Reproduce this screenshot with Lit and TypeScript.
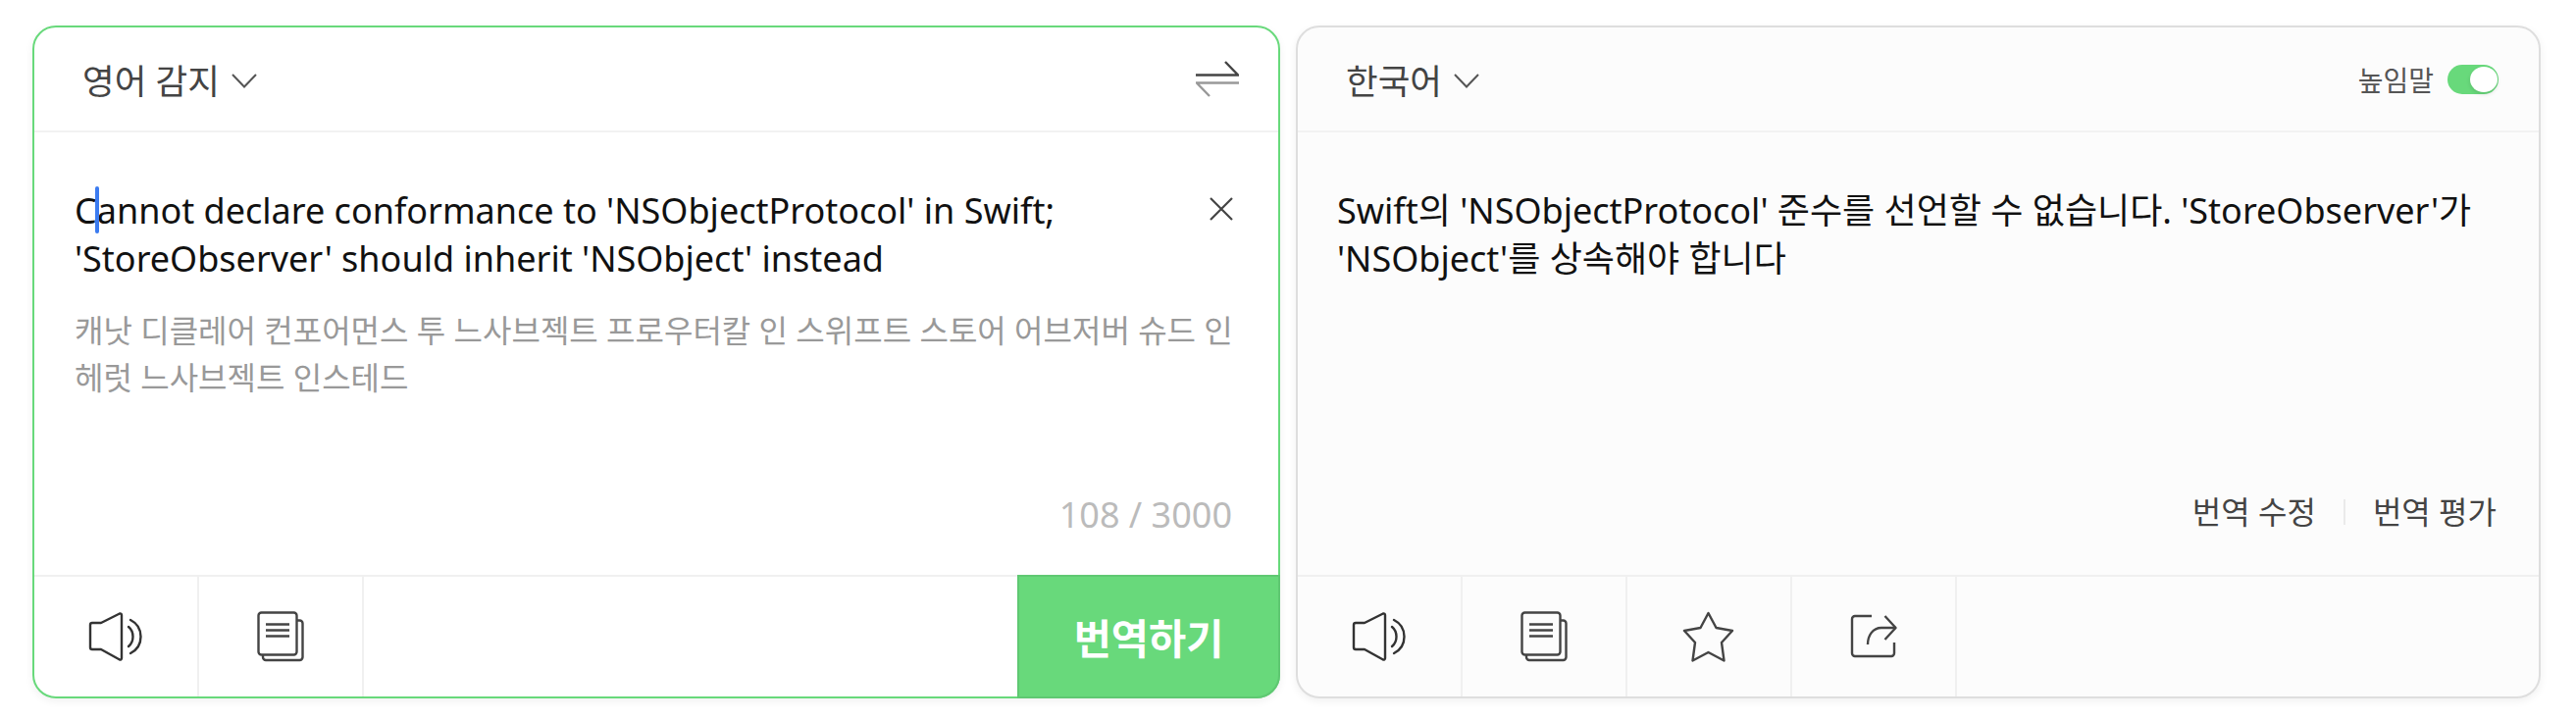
import { LitElement, html, css, svg } from "lit";
import { customElement } from "lit/decorators.js";

const speaker = svg`<svg class="ic" width="56" height="50" viewBox="-1 -1 56 50" fill="none" stroke="#333" stroke-width="2.4" stroke-linecap="round" stroke-linejoin="round"><path d="M12 10H3a2 2 0 0 0-2 2v23a2 2 0 0 0 2 2h9l19 10.500a1.500 1.500 0 0 0 2-1.500V2a1.500 1.500 0 0 0-2-1.500z"/><path d="M40 14c6 5 6 15 0 20"/><path d="M42 7c14 7 14 27 0 34"/></svg>`;
const copy = svg`<svg class="ic" width="48" height="52" viewBox="-1 -1 48 52" fill="none" stroke="#444" stroke-width="2.4" stroke-linejoin="round"><rect x="0.500" y="0.500" width="39" height="43" rx="3"/><path d="M40 8.500h2.500a3 3 0 0 1 3 3V46a3 3 0 0 1-3 3H8a3 3 0 0 1-3-3v-2"/><path d="M8 12.500h24M8 18.500h24M8 24.500h24"/></svg>`;
const star = svg`<svg class="ic" width="54" height="52" viewBox="-1 -1 54 52" fill="none" stroke="#444" stroke-width="2.4" stroke-linejoin="round"><path d="M25.500 1 33.500 16 50 19 39 31 41.500 49.500 25.500 41 9.500 49.500 12 31 1 19 17.500 16z"/></svg>`;
const share = svg`<svg class="ic" width="48" height="46" viewBox="-1 -1 48 46" fill="none" stroke="#444" stroke-width="2.4" stroke-linejoin="round"><path d="M21 1H4a3 3 0 0 0-3 3v35a3 3 0 0 0 3 3h37a3 3 0 0 0 3-3V28"/><path d="M34.500 1 45.500 13 34.500 25"/><path d="M45.500 13H31C22 13 17 21 17 30"/></svg>`;
const chevron = svg`<svg class="chev" width="26" height="15" viewBox="0 0 26 15" fill="none" stroke="#555" stroke-width="2"><path d="M1 1l12 12.500L25 1"/></svg>`;
const swap = svg`<svg width="44" height="38" viewBox="0 0 44 38" fill="none" stroke-width="2.400"><path d="M0 14.500H43L30 1" stroke="#444"/><path d="M44 22.500H1L14 36" stroke="#999"/></svg>`;
const close = svg`<svg class="x" width="24" height="24" viewBox="0 0 24 24" fill="none" stroke="#444" stroke-width="2.200"><path d="M1 1l22 22M23 1 1 23"/></svg>`;

@customElement("app-root")
export class AppRoot extends LitElement {
  static styles = css`
    :host {
      display: flex;
      gap: 16px;
      padding: 26px 36px 22px 33px;
      background: #fff;
      font-family: "Noto Sans", "Noto Sans CJK KR", sans-serif;
      color: #111;
      box-sizing: border-box;
      width: 2626px;
      height: 734px;
    }
    .card {
      flex: none;
      width: 1269px;
      height: 686px;
      box-sizing: border-box;
      border: 2px solid #dedede;
      border-radius: 24px;
      background: #fcfcfc;
      box-shadow: 0 3px 8px rgba(0, 0, 0, 0.06);
      display: flex;
      flex-direction: column;
    }
    .card.src {
      width: 1272px;
      border-color: #68d97b;
      background: #fff;
    }
    .head {
      height: 105px;
      flex: none;
      border-bottom: 2px solid #f2f2f2;
      display: flex;
      align-items: center;
      justify-content: space-between;
      padding: 0 40px 0 49px;
    }
    .lang {
      display: flex;
      align-items: center;
      gap: 12px;
      font-size: 35.500px;
      color: #444;
    }
    .chev { margin-top: 4px; }
    .honor {
      display: flex;
      align-items: center;
      gap: 14px;
      font-size: 28px;
      color: #555;
      padding-right: 1px;
    }
    .toggle {
      width: 52px;
      height: 30px;
      border-radius: 15px;
      background: #68d97b;
      display: flex;
      justify-content: flex-end;
      box-sizing: border-box;
      padding: 2px 1px;
    }
    .knob {
      width: 28px;
      height: 26px;
      border-radius: 50%;
      background: #fff;
      box-shadow: 0 2px 4px rgba(0, 0, 0, 0.12);
    }
    .body {
      flex: 1;
      min-height: 0;
      display: flex;
      flex-direction: column;
      padding: 55px 28px 0 41px;
    }
    .dst .body { padding-left: 40px; }
    .row {
      display: flex;
      justify-content: space-between;
      align-items: flex-start;
    }
    .text {
      font-size: 36px;
      line-height: 49px;
      white-space: nowrap;
      position: relative;
    }
    .x { margin: 11px 18px 0 0; }
    .caret {
      position: absolute;
      left: 21px;
      top: 0;
      width: 4px;
      height: 48px;
      border-radius: 2px;
      background: #3b7bf0;
    }
    .phon {
      margin-top: 25px;
      font-size: 32px;
      line-height: 48px;
      color: #999;
      white-space: nowrap;
    }
    .count {
      margin-top: auto;
      padding: 0 19px 38px 0;
      text-align: right;
      font-size: 36px;
      line-height: 46px;
      color: #bbb;
    }
    .links {
      margin-top: auto;
      padding: 0 15px 41px 0;
      display: flex;
      justify-content: flex-end;
      align-items: center;
      gap: 28px;
      font-size: 32px;
      line-height: 46px;
      color: #444;
    }
    .sep { width: 2px; height: 26px; background: #eaeaea; }
    .foot {
      height: 122px;
      flex: none;
      border-top: 2px solid #f0f0f0;
      display: flex;
      align-items: stretch;
    }
    .cell {
      flex: none;
      box-sizing: border-box;
      width: 168px;
      border-right: 2px solid #f0f0f0;
      display: flex;
      align-items: center;
      justify-content: center;
    }
    .go {
      margin: -2px -2px -2px auto;
      width: 268px;
      box-sizing: border-box;
      background: #68d97b;
      border: 2px solid #5fc872;
      border-bottom-right-radius: 24px;
      color: #fff;
      font-weight: 700;
      font-size: 41.500px;
      display: flex;
      align-items: center;
      justify-content: center;
    }
  `;

  render() {
    return html`
      <section class="card src">
        <div class="head">
          <div class="lang">영어 감지 ${chevron}</div>
          ${swap}
        </div>
        <div class="body">
          <div class="row">
            <div class="text"><span class="caret"></span>Cannot declare conformance to 'NSObjectProtocol' in Swift;<br />'StoreObserver' should inherit 'NSObject' instead</div>
            ${close}
          </div>
          <div class="phon">캐낫 디클레어 컨포어먼스 투 느사브젝트 프로우터칼 인 스위프트 스토어 어브저버 슈드 인<br />헤럿 느사브젝트 인스테드</div>
          <div class="count">108 / 3000</div>
        </div>
        <div class="foot">
          <div class="cell">${speaker}</div>
          <div class="cell">${copy}</div>
          <div class="go">번역하기</div>
        </div>
      </section>
      <section class="card dst">
        <div class="head">
          <div class="lang">한국어 ${chevron}</div>
          <div class="honor">높임말 <span class="toggle"><span class="knob"></span></span></div>
        </div>
        <div class="body">
          <div class="text">Swift의 'NSObjectProtocol' 준수를 선언할 수 없습니다. 'StoreObserver'가<br />'NSObject'를 상속해야 합니다</div>
          <div class="links"><span>번역 수정</span><span class="sep"></span><span>번역 평가</span></div>
        </div>
        <div class="foot">
          <div class="cell">${speaker}</div>
          <div class="cell">${copy}</div>
          <div class="cell">${star}</div>
          <div class="cell">${share}</div>
        </div>
      </section>
    `;
  }
}
